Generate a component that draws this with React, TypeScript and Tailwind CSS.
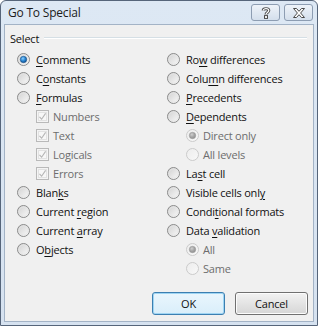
import React from 'react';

type Item = { text: string; key?: number; kind: 'radio' | 'check'; checked?: boolean; disabled?: boolean; sub?: boolean };

const left: Item[] = [
  { text: 'Comments', key: 0, kind: 'radio', checked: true },
  { text: 'Constants', key: 1, kind: 'radio' },
  { text: 'Formulas', key: 0, kind: 'radio' },
  { text: 'Numbers', kind: 'check', checked: true, disabled: true, sub: true },
  { text: 'Text', kind: 'check', checked: true, disabled: true, sub: true },
  { text: 'Logicals', kind: 'check', checked: true, disabled: true, sub: true },
  { text: 'Errors', kind: 'check', checked: true, disabled: true, sub: true },
  { text: 'Blanks', key: 4, kind: 'radio' },
  { text: 'Current region', key: 8, kind: 'radio' },
  { text: 'Current array', key: 8, kind: 'radio' },
  { text: 'Objects', key: 1, kind: 'radio' },
];

const right: Item[] = [
  { text: 'Row differences', key: 2, kind: 'radio' },
  { text: 'Column differences', key: 4, kind: 'radio' },
  { text: 'Precedents', key: 0, kind: 'radio' },
  { text: 'Dependents', key: 0, kind: 'radio' },
  { text: 'Direct only', kind: 'radio', checked: true, disabled: true, sub: true },
  { text: 'All levels', kind: 'radio', disabled: true, sub: true },
  { text: 'Last cell', key: 2, kind: 'radio' },
  { text: 'Visible cells only', key: 17, kind: 'radio' },
  { text: 'Conditional formats', key: 5, kind: 'radio' },
  { text: 'Data validation', key: 5, kind: 'radio' },
  { text: 'All', kind: 'radio', checked: true, disabled: true, sub: true },
  { text: 'Same', kind: 'radio', disabled: true, sub: true },
];

function Radio({ checked, disabled }: { checked?: boolean; disabled?: boolean }) {
  const id = `r-${checked ? 'c' : 'u'}-${disabled ? 'd' : 'e'}`;
  return (
    <svg width="13" height="13" viewBox="0 0 13 13" className="shrink-0">
      <defs>
        <linearGradient id={`${id}-f`} x1="0" y1="0" x2="1" y2="1">
          <stop offset="0" stopColor={disabled ? '#ececec' : '#cfcfcf'} />
          <stop offset="1" stopColor={disabled ? '#f9f9f9' : '#fbfbfb'} />
        </linearGradient>
        <radialGradient id={`${id}-d`} cx="0.4" cy="0.35" r="0.7">
          <stop offset="0" stopColor={disabled ? '#d0d0d0' : '#8fd0ff'} />
          <stop offset="0.5" stopColor={disabled ? '#a8a8a8' : '#2c8ad6'} />
          <stop offset="1" stopColor={disabled ? '#8c8c8c' : '#0c4a8a'} />
        </radialGradient>
      </defs>
      <circle cx="6.5" cy="6.5" r="6" fill={`url(#${id}-f)`} stroke={disabled ? '#cacaca' : '#8a8b8b'} strokeWidth="1" />
      {!disabled && <circle cx="6.5" cy="6.5" r="4.6" fill="none" stroke="#e4e4e4" strokeWidth="0.8" />}
      {checked && <circle cx="6.5" cy="6.5" r="3.2" fill={`url(#${id}-d)`} stroke={disabled ? '#9a9a9a' : '#1a4f86'} strokeWidth="0.6" />}
    </svg>
  );
}

function Check() {
  return (
    <svg width="13" height="13" viewBox="0 0 13 13" className="shrink-0">
      <rect x="0.5" y="0.5" width="12" height="12" fill="#f4f4f4" stroke="#b9b9b9" />
      <rect x="2.5" y="2.5" width="8" height="8" fill="#f7f7f7" stroke="#e2e2e2" />
      <path d="M3.5 6.8 L5.6 9.2 L9.6 3.4" fill="none" stroke="#b5b5b5" strokeWidth="1.1" />
    </svg>
  );
}

function Label({ text, k }: { text: string; k?: number }) {
  if (k === undefined) return <span>{text}</span>;
  return (
    <span>
      {text.slice(0, k)}
      <span className="underline underline-offset-[2px]">{text[k]}</span>
      {text.slice(k + 1)}
    </span>
  );
}

function Row({ item }: { item: Item }) {
  return (
    <div className={`h-[19px] flex items-center ${item.sub ? 'gap-[4px] pl-[19px]' : 'gap-[6px]'} ${item.disabled ? 'text-[#6d6d6d]' : 'text-[#111]'}`}>
      {item.kind === 'radio' ? <Radio checked={item.checked} disabled={item.disabled} /> : <Check />}
      <Label text={item.text} k={item.key} />
    </div>
  );
}

function TitleButton({ children }: { children: React.ReactNode }) {
  return (
    <div className="w-[29px] h-[17px] rounded-[3px] border border-[#8d9db2] bg-gradient-to-b from-[#eef3f9] to-[#d4dfec] flex items-center justify-center">
      {children}
    </div>
  );
}

function DlgButton({ children, focused }: { children: React.ReactNode; focused?: boolean }) {
  return (
    <div
      className={`w-[73px] h-[23px] rounded-[3px] border flex items-center justify-center text-[#111] ${
        focused
          ? 'border-[#3c7fb1] bg-gradient-to-b from-[#eaf6fd] to-[#d9eefa] shadow-[inset_0_0_0_1px_#9fd5f3]'
          : 'border-[#707070] bg-gradient-to-b from-[#f2f2f2] to-[#d6d6d6] shadow-[inset_0_0_0_1px_#fcfcfc]'
      }`}
    >
      {children}
    </div>
  );
}

export default function App() {
  return (
    <div className="w-[318px] h-[326px] bg-white">
      <div className="w-full h-full flex flex-col border border-[#56657a] rounded-t-[6px] bg-gradient-to-b from-[#dde8f4] to-[#d6e2f0] font-['Open_Sans',sans-serif] text-[11px] leading-none tracking-[-0.2px]">
        <div className="h-[23px] shrink-0 flex items-center pl-[7px] pr-[4px]">
          <span className="text-[12px] text-[#1b1b1b] flex-1">Go To Special</span>
          <div className="flex gap-[4px]">
            <TitleButton>
              <svg width="10" height="12" viewBox="0 0 10 12">
                <path d="M2.2 3.6 C2.2 1 7.8 1 7.8 3.6 C7.8 5.4 5 5.4 5 7.4" fill="none" stroke="#4a4a4a" strokeWidth="3" />
                <path d="M2.2 3.6 C2.2 1 7.8 1 7.8 3.6 C7.8 5.4 5 5.4 5 7.4" fill="none" stroke="#ffffff" strokeWidth="1.2" />
                <rect x="3.5" y="8.6" width="3" height="2.8" fill="#ffffff" stroke="#4a4a4a" strokeWidth="1" />
              </svg>
            </TitleButton>
            <TitleButton>
              <svg width="14" height="10" viewBox="0 0 14 10">
                <path d="M1.5 0.5 H4.5 L7 3.3 L9.5 0.5 H12.5 L8.6 5 L12.5 9.5 H9.5 L7 6.7 L4.5 9.5 H1.5 L5.4 5 Z" fill="#ffffff" stroke="#4a4a4a" strokeWidth="1" strokeLinejoin="round" />
              </svg>
            </TitleButton>
          </div>
        </div>
        <div className="flex-1 mx-[3px] mb-[3px] border border-[#a3b3c6] bg-[#f0f0f0] px-[5px] pt-[5px] flex flex-col">
          <div className="h-[16px] flex items-center">
            <span className="text-[#111]">Select</span>
            <div className="flex-1 ml-[5px] mr-[1px] h-[2px] border-t border-[#d5dfe5] border-b border-b-white" />
          </div>
          <div className="mt-[4px] grid grid-cols-[157px_1fr]">
            <div className="flex flex-col pl-[7px]">
              {left.map((it) => (
                <Row key={it.text} item={it} />
              ))}
            </div>
            <div className="flex flex-col">
              {right.map((it) => (
                <Row key={it.text} item={it} />
              ))}
            </div>
          </div>
          <div className="mt-[14px] flex justify-end gap-[10px]">
            <DlgButton focused>OK</DlgButton>
            <DlgButton>Cancel</DlgButton>
          </div>
        </div>
      </div>
    </div>
  );
}
